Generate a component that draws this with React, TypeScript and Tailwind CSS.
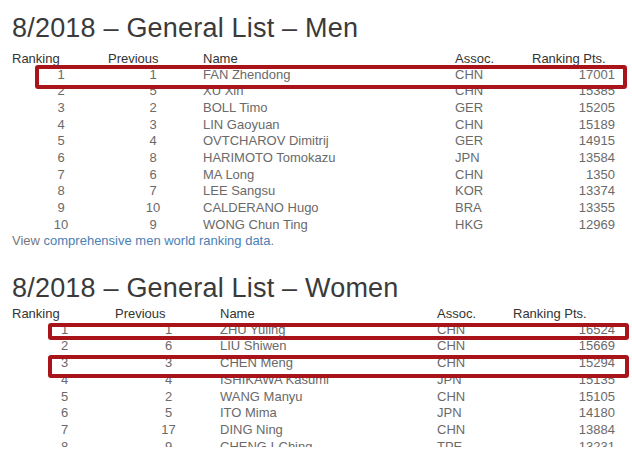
const men = [
  ['1', '1', 'FAN Zhendong', 'CHN', '17001'],
  ['2', '5', 'XU Xin', 'CHN', '15385'],
  ['3', '2', 'BOLL Timo', 'GER', '15205'],
  ['4', '3', 'LIN Gaoyuan', 'CHN', '15189'],
  ['5', '4', 'OVTCHAROV Dimitrij', 'GER', '14915'],
  ['6', '8', 'HARIMOTO Tomokazu', 'JPN', '13584'],
  ['7', '6', 'MA Long', 'CHN', '1350'],
  ['8', '7', 'LEE Sangsu', 'KOR', '13374'],
  ['9', '10', 'CALDERANO Hugo', 'BRA', '13355'],
  ['10', '9', 'WONG Chun Ting', 'HKG', '12969'],
];

const women = [
  ['1', '1', 'ZHU Yuling', 'CHN', '16524'],
  ['2', '6', 'LIU Shiwen', 'CHN', '15669'],
  ['3', '3', 'CHEN Meng', 'CHN', '15294'],
  ['4', '4', 'ISHIKAWA Kasumi', 'JPN', '15135'],
  ['5', '2', 'WANG Manyu', 'CHN', '15105'],
  ['6', '5', 'ITO Mima', 'JPN', '14180'],
  ['7', '17', 'DING Ning', 'CHN', '13884'],
  ['8', '9', 'CHENG I-Ching', 'TPE', '13231'],
];

// column templates, measured off the screenshot
const menCols = 'grid grid-cols-[98px_93px_252px_65px_95px]';
const womenCols = 'grid grid-cols-[105px_103px_217px_76px_102px]';

function Title({ children }: { children: string }) {
  return (
    <h2 className="h-[27px] text-[27px] leading-[27px] tracking-[0.2px] text-[#3a3a3a]">
      {children}
    </h2>
  );
}

function Header({ cols, prevPad, ptsPad }: { cols: string; prevPad: string; ptsPad: string }) {
  return (
    <div className={`${cols} h-[16px] text-[13px] leading-[16px] text-[#333]`}>
      <span>Ranking</span>
      <span className={prevPad}>Previous</span>
      <span>Name</span>
      <span>Assoc.</span>
      <span className={ptsPad}>Ranking Pts.</span>
    </div>
  );
}

function Rows({ rows, cols, prevClass }: { rows: string[][]; cols: string; prevClass: string }) {
  return (
    <div>
      {rows.map((r) => (
        <div key={r[0]} className={`${cols} h-[16.7px] text-[13px] leading-[16.7px] text-[#6a6a6a]`}>
          <span className="text-center">{r[0]}</span>
          <span className={prevClass}>{r[1]}</span>
          <span>{r[2]}</span>
          <span>{r[3]}</span>
          <span className="text-right">{r[4]}</span>
        </div>
      ))}
    </div>
  );
}

export default function App() {
  return (
    <div className="h-[459px] w-[632px] bg-white" style={{ fontFamily: '"Liberation Sans", Arial, sans-serif' }}>
      <div className="relative h-[447px] overflow-hidden pl-[12px] pt-[15px]">
        {/* Men */}
        <Title>8/2018 – General List – Men</Title>
        <div className="mt-[8.6px]">
          <Header cols={menCols} prevPad="-ml-[2px]" ptsPad="pl-[12px]" />
          <Rows rows={men} cols={menCols} prevClass="text-center pr-[7px]" />
        </div>
        <p className="h-[16.7px] text-[13px] leading-[16.7px] text-[#777]">
          View <span className="text-[#4a80b4]">comprehensive men world ranking data</span>.
        </p>

        {/* Women */}
        <div className="mt-[24.6px]">
          <Title>8/2018 – General List – Women</Title>
        </div>
        <div className="mt-[4px]">
          <Header cols={womenCols} prevPad="-ml-[2px]" ptsPad="" />
          <Rows rows={women} cols={womenCols} prevClass="text-center" />
        </div>

        {/* red highlight annotations */}
        <div className="absolute left-[35px] top-[65px] h-[24px] w-[592px] rounded-[3px] border-[4px] border-[#a8141a]" />
        <div className="absolute left-[48px] top-[323px] h-[17px] w-[581px] rounded-[3px] border-[4px] border-[#a8141a]" />
        <div className="absolute left-[48px] top-[355px] h-[23px] w-[581px] rounded-[3px] border-[4px] border-[#a8141a]" />
      </div>
    </div>
  );
}
